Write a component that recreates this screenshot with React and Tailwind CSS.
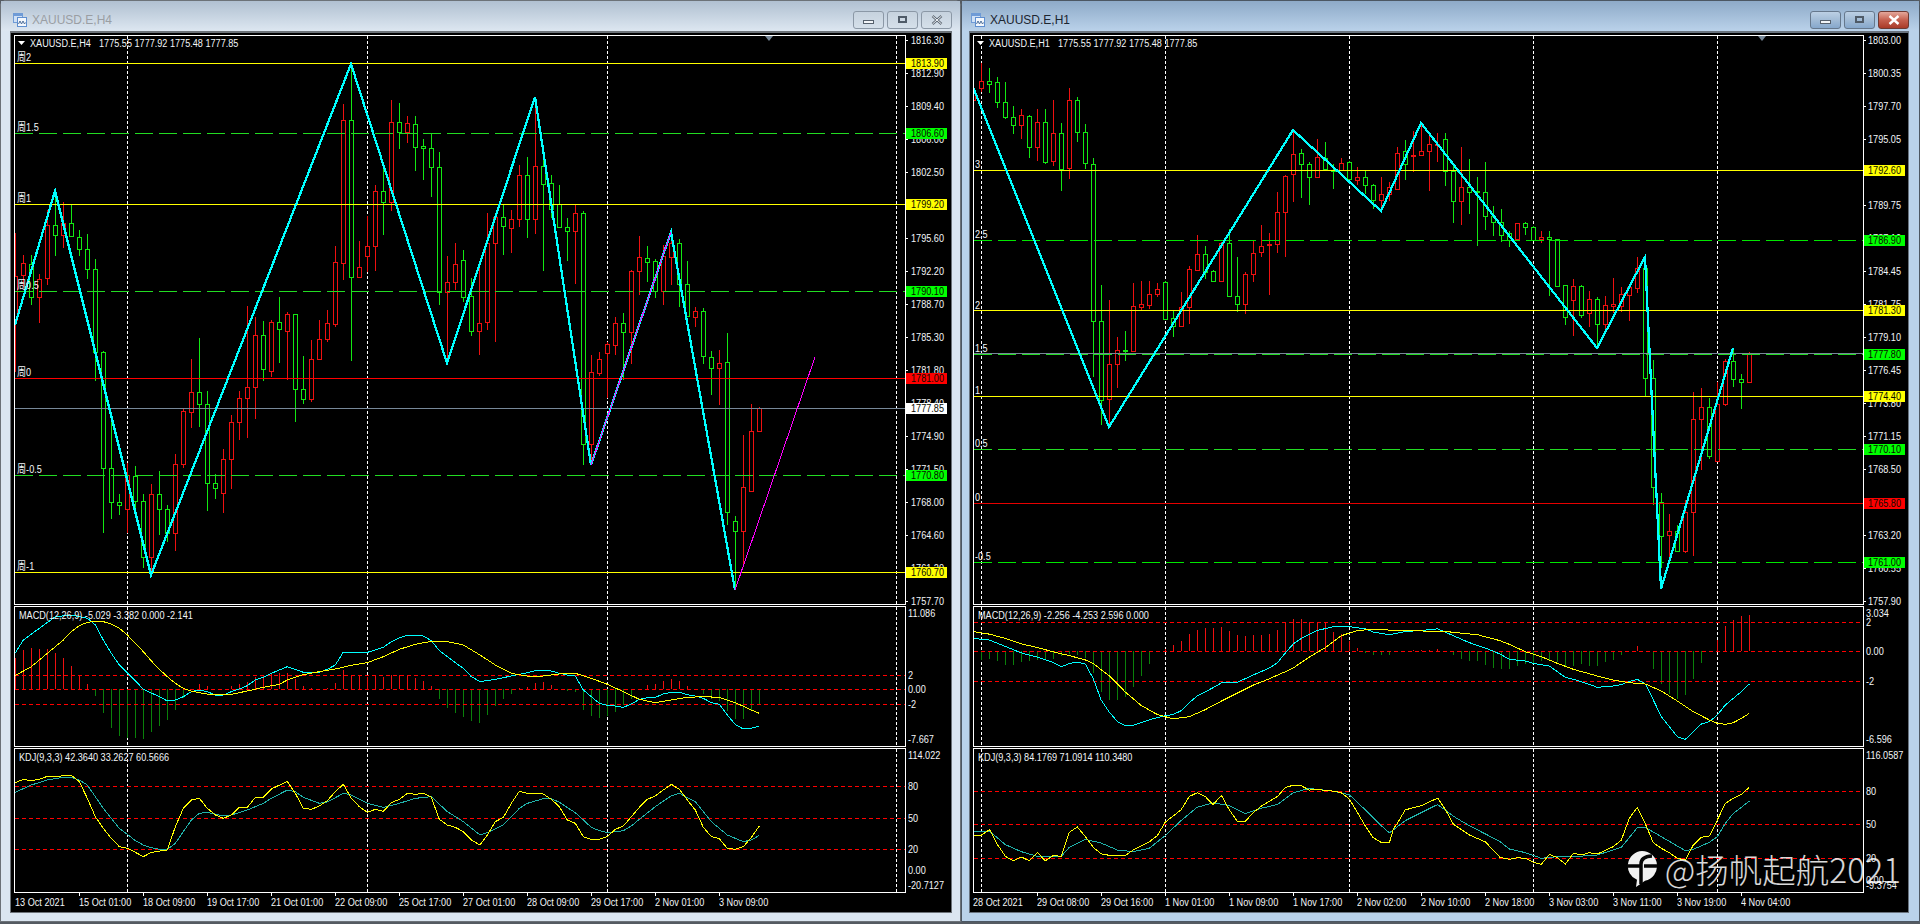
import React from "react";

const GREEN = "#12e812";
const RED = "#ee1010";
const YELLOW = "#ffff00";
const CYAN = "#00ffff";
const TEAL = "#20b2aa";

// [high, bodyTop, bodyBottom, low, isRed]
const leftCandles = [
  [233,276,320,372,1],[255,263,275,287,1],[255,264,297,305,0],[274,279,297,323,1],[210,225,278,285,1],
  [192,225,235,256,0],[202,223,235,248,1],[205,223,236,237,0],[230,237,249,256,0],[234,249,269,279,0],
  [259,269,352,381,0],[351,352,468,533,0],[422,468,502,519,0],[494,502,505,515,0],[463,475,509,533,1],
  [466,476,501,510,0],[494,501,557,568,0],[484,494,557,577,1],[471,494,509,535,0],[505,509,533,542,0],
  [454,464,533,551,1],[409,411,464,468,1],[359,392,412,428,1],[338,392,404,427,0],[391,404,483,511,0],
  [474,483,488,499,0],[449,459,493,513,1],[415,422,459,489,1],[391,398,422,440,1],[306,387,398,438,1],
  [317,335,387,419,1],[321,335,369,381,0],[320,322,371,377,1],[297,322,329,363,0],[312,314,331,380,1],
  [314,314,389,422,0],[356,389,399,404,0],[340,359,399,402,1],[320,339,359,360,1],[310,323,339,342,1],
  [246,262,324,327,1],[104,120,263,280,1],[64,120,277,361,0],[241,267,277,278,1],[216,246,256,272,1],
  [185,191,246,271,1],[167,191,202,235,0],[100,122,202,211,1],[103,122,132,149,0],[116,123,132,143,1],
  [116,124,147,171,0],[139,146,148,180,0],[133,148,167,197,0],[152,167,292,305,0],[256,282,292,362,1],
  [243,264,282,290,1],[250,260,297,302,0],[278,296,331,336,0],[263,323,331,355,1],[213,243,322,330,1],
  [217,217,243,342,1],[205,217,226,255,0],[210,219,228,253,1],[165,175,219,227,1],[157,175,219,238,0],
  [103,166,219,234,1],[157,166,184,271,0],[175,183,209,218,0],[185,204,227,228,0],[218,227,231,261,0],
  [205,213,231,284,1],[211,213,444,465,0],[355,372,444,463,1],[352,359,373,376,1],[342,344,353,398,1],
  [317,323,345,355,1],[313,323,332,380,0],[270,271,332,364,1],[236,257,271,295,1],[246,258,262,282,0],
  [259,261,291,298,0],[245,256,291,305,1],[232,243,257,285,1],[239,243,284,307,0],[261,284,316,317,0],
  [307,311,317,327,1],[308,311,356,364,0],[351,357,368,395,0],[350,363,368,405,1],[333,362,512,525,0],
  [516,521,531,590,0],[435,487,531,567,1],[404,431,491,492,1],[407,408,431,431,1],
];

const rightCandles = [
  [87,93,100,107,1],[63,81,88,92,1],[68,81,84,93,0],[77,82,102,108,0],[82,102,117,119,0],
  [106,117,125,134,0],[109,115,125,139,1],[115,116,147,158,0],[109,122,147,161,1],[109,122,162,164,0],
  [100,133,161,166,1],[123,133,169,191,0],[88,100,168,179,1],[97,100,132,142,0],[124,132,163,169,0],
  [158,164,321,377,0],[285,321,400,425,0],[300,364,399,427,1],[337,350,364,388,1],[331,350,351,361,0],
  [283,306,351,351,1],[281,304,307,310,1],[281,294,305,309,1],[283,289,294,297,1],[281,282,319,319,0],
  [311,318,326,337,0],[292,307,326,326,1],[266,269,307,324,1],[235,254,270,270,1],[246,254,272,279,0],
  [270,271,281,282,0],[242,243,281,282,1],[229,243,296,296,0],[257,296,304,312,0],[272,274,304,314,1],
  [241,253,274,282,1],[225,246,252,257,1],[233,244,245,295,1],[192,212,244,253,1],[175,176,212,257,1],
  [132,154,174,202,1],[149,153,164,198,0],[162,164,177,205,0],[139,157,177,177,1],[142,158,169,169,0],
  [164,170,171,189,0],[158,163,170,171,1],[161,162,179,179,0],[167,177,180,185,1],[170,177,185,194,0],
  [184,185,200,209,0],[177,194,200,207,1],[182,187,194,201,1],[147,153,189,189,1],[140,151,164,180,0],
  [131,155,156,172,1],[123,151,155,156,1],[135,144,151,191,1],[133,144,145,162,1],[133,139,171,186,0],
  [166,171,201,223,0],[147,187,201,225,1],[159,187,192,214,0],[177,191,192,246,0],[162,192,216,230,0],
  [206,216,222,236,0],[209,222,235,242,0],[231,233,240,247,0],[223,223,239,240,1],[222,223,227,235,0],
  [226,227,240,241,0],[231,237,239,243,1],[231,237,239,296,0],[239,239,286,287,0],[285,285,317,325,0],
  [279,286,300,336,1],[285,286,315,318,0],[291,299,313,327,1],[297,299,324,348,0],[296,305,324,330,1],
  [278,304,306,313,1],[287,294,306,312,1],[285,287,295,321,1],[257,268,288,293,1],[257,268,378,396,0],
  [360,378,487,505,0],[493,502,536,568,0],[514,531,535,563,1],[525,531,551,552,0],[500,512,551,553,1],
  [392,419,512,556,1],[388,407,419,470,1],[398,407,456,459,0],[382,404,461,461,1],[359,361,404,406,1],
  [348,361,379,387,0],[374,379,382,409,0],[352,353,382,383,1],
];

// indicator lines read off the chart, in crop coordinates
const crop = (pts, ox, oy, sx = 3, sy = 3) => pts.map(([x, y]) => `${ox + x / sx},${oy + y / sy}`).join(" ");
const crop2 = (pts) => crop(pts, 970, 60, 2.904, 1.867);

const leftMacdHist = [
  205,180,175,178,178,190,205,228,254,282,318,368,413,437,445,443,447,425,408,390,360,325,298,282,288,298,298,288,282,275,
  262,258,250,248,248,268,288,295,297,295,278,240,255,258,260,258,262,255,255,255,263,272,288,327,353,368,380,392,400,375,
  348,327,312,294,292,278,276,285,298,302,306,360,378,385,378,366,345,326,300,285,283,273,267,273,288,298,312,326,332,362,
  387,387,362,343,
];

const rightMacdHist = [
  -9,-9,-8,-10,-14,-14,-11,-10,-9,-9,-8,-5,-3,-4,-7,-22,-41,-49,-49,-46,-36,-25,-13,0,2,6,10,17,21,23,
  23,24,20,16,15,16,16,17,21,28,32,32,29,29,28,19,17,10,3,-2,-4,-4,-4,-1,0,1,1,1,2,0,
  -4,-8,-10,-10,-14,-17,-18,-18,-15,-13,-12,-10,-9,-11,-15,-15,-13,-15,-15,-11,-9,-4,0,5,0,-18,-33,-43,-48,-44,
  -28,-12,-1,11,25,31,35,36,
];

const leftLines = {
  macdCyan: crop([[45,190],[70,150],[118,115],[166,80],[214,75],[262,85],[286,105],[310,150],[334,190],[358,225],[382,248],[406,272],[430,298],[478,320],[502,333],[526,330],[550,320],[574,305],[598,300],[622,305],[646,315],[670,315],[694,305],[718,297],[742,287],[766,270],[790,262],[814,250],[862,230],[886,238],[910,247],[958,247],[982,238],[1006,225],[1030,186],[1054,189],[1102,187],[1126,180],[1150,172],[1174,155],[1198,143],[1222,136],[1246,135],[1270,138],[1294,152],[1318,182],[1342,200],[1366,218],[1390,235],[1414,260],[1440,275]], 0, 590)
    + " " + crop([[46,268],[94,258],[142,248],[166,242],[190,240],[214,243],[238,250],[262,255],[286,258],[310,300],[334,320],[358,340],[382,346],[406,348],[430,352],[454,342],[478,328],[502,323],[526,322],[550,312],[574,307],[598,307],[622,314],[646,318],[670,325],[694,338],[718,343],[742,375],[766,404],[790,417],[814,415],[838,408]], 480, 590),
  macdYellow: crop([[45,257],[94,230],[142,190],[190,150],[214,125],[238,107],[262,97],[286,94],[310,95],[334,102],[358,115],[382,135],[406,160],[430,185],[454,213],[478,238],[502,260],[526,280],[550,295],[574,303],[598,308],[622,312],[646,315],[694,313],[742,303],[790,292],[838,283],[862,270],[910,254],[958,245],[1006,237],[1054,226],[1102,218],[1150,200],[1198,178],[1246,163],[1294,154],[1342,155],[1390,165],[1440,195]], 0, 590)
    + " " + crop([[46,225],[94,250],[142,258],[190,258],[238,252],[286,250],[334,265],[382,283],[430,305],[478,328],[526,338],[574,330],[622,322],[670,320],[718,322],[766,338],[814,360],[838,370]], 480, 590),
  kdjYellow: crop([[45,578],[70,568],[94,572],[118,568],[142,559],[166,559],[214,556],[238,575],[262,625],[286,680],[310,715],[334,745],[358,770],[382,775],[406,787],[430,800],[454,787],[502,780],[526,710],[550,655],[574,630],[598,625],[622,655],[646,675],[670,685],[694,675],[718,652],[742,652],[766,622],[790,622],[814,597],[862,574],[886,610],[910,655],[934,658],[958,648],[982,632],[1006,605],[1030,583],[1054,625],[1078,650],[1102,667],[1126,658],[1150,664],[1174,638],[1198,628],[1222,610],[1246,613],[1270,610],[1294,622],[1318,688],[1342,705],[1366,712],[1390,725],[1414,750],[1440,765]], 0, 590)
    + " " + crop([[22,735],[46,695],[70,682],[94,640],[118,604],[142,610],[190,612],[214,628],[238,650],[262,690],[286,700],[310,740],[334,748],[358,748],[382,740],[406,718],[430,708],[454,680],[478,652],[502,628],[526,618],[550,600],[574,583],[598,598],[622,630],[646,660],[670,712],[694,740],[718,746],[742,775],[766,778],[790,770],[814,742],[838,708]], 480, 590),
  kdjTeal: crop([[45,607],[94,585],[142,570],[190,562],[214,562],[238,570],[262,585],[286,620],[310,655],[334,685],[358,715],[382,733],[406,752],[430,765],[454,773],[478,778],[502,778],[526,760],[550,725],[574,690],[598,670],[622,667],[670,678],[694,675],[742,660],[790,640],[814,625],[862,600],[886,605],[910,622],[958,640],[982,636],[1030,610],[1054,615],[1102,640],[1150,652],[1198,640],[1246,625],[1294,620],[1342,665],[1390,695],[1440,735]], 0, 590)
    + " " + crop([[22,728],[70,705],[118,655],[142,640],[190,626],[214,626],[238,637],[286,668],[334,712],[358,722],[382,728],[430,722],[454,708],[478,688],[526,650],[574,617],[598,610],[646,635],[694,695],[742,735],[790,755],[814,750],[838,736]], 480, 590),
};

const rightLines = {
  macdCyan: crop2([[9,1080],[57,1083],[103,1095],[149,1107],[196,1115],[242,1125],[265,1133],[288,1127],[312,1124],[335,1128],[358,1155],[381,1195],[405,1218],[428,1235],[451,1243],[474,1242],[520,1232],[567,1224],[590,1222],[613,1215],[637,1200],[660,1187],[706,1172],[730,1163],[776,1162],[823,1148],[870,1135],[893,1125],[916,1107],[939,1090],[962,1080],[1009,1065],[1055,1058],[1102,1058],[1148,1062],[1171,1068],[1218,1073],[1264,1067],[1311,1065],[1358,1062],[1404,1075],[1451,1088],[1497,1098]])
    + " " + crop([[0,162],[28,178],[76,183],[100,190],[148,198],[172,215],[196,232],[220,238],[244,245],[292,262],[340,258],[364,254],[388,244],[412,238],[436,252],[460,300],[484,350],[508,380],[532,410],[556,418],[580,395],[604,372],[628,365],[652,345],[676,315],[700,295],[724,275],[748,252]], 1500, 600),
  macdYellow: crop2([[9,1067],[57,1072],[103,1080],[149,1090],[196,1097],[242,1105],[288,1112],[335,1120],[358,1127],[405,1150],[451,1180],[497,1205],[544,1222],[590,1230],[637,1226],[683,1213],[730,1197],[776,1182],[823,1167],[870,1155],[916,1142],[939,1135],[985,1115],[1032,1097],[1078,1075],[1125,1065],[1171,1063],[1241,1065],[1311,1066],[1381,1067],[1427,1070],[1474,1073]])
    + " " + crop([[0,122],[28,133],[76,155],[124,170],[172,190],[220,208],[292,228],[340,240],[388,248],[436,252],[484,273],[532,303],[580,335],[628,360],[652,370],[676,373],[700,368],[724,355],[748,340]], 1500, 600),
  kdjYellow: crop2([[9,1447],[33,1447],[57,1437],[80,1465],[103,1487],[126,1495],[149,1488],[172,1495],[196,1480],[219,1495],[242,1485],[265,1487],[288,1442],[312,1432],[335,1450],[358,1470],[381,1482],[405,1485],[451,1485],[474,1475],[520,1460],[544,1448],[567,1423],[613,1400],[637,1375],[660,1368],[683,1375],[706,1390],[730,1373],[753,1400],[776,1421],[800,1421],[823,1405],[846,1393],[893,1375],[916,1358],[939,1354],[962,1355],[985,1363],[1009,1362],[1055,1365],[1078,1368],[1102,1380],[1125,1405],[1148,1430],[1171,1452],[1195,1461],[1218,1461],[1230,1435],[1241,1425],[1264,1400],[1311,1392],[1358,1378],[1381,1400],[1404,1427],[1451,1447],[1497,1460]])
    + " " + crop([[0,772],[28,778],[52,773],[76,775],[100,787],[124,793],[148,763],[172,773],[196,792],[220,760],[244,765],[268,758],[292,762],[340,740],[364,720],[388,655],[412,622],[436,672],[460,728],[484,745],[508,758],[532,775],[556,780],[580,735],[604,712],[628,708],[652,660],[676,610],[700,595],[724,583],[748,562]], 1500, 600),
  kdjTeal: crop2([[9,1440],[57,1440],[103,1465],[149,1478],[196,1487],[265,1487],[288,1470],[335,1455],[381,1462],[428,1475],[474,1478],[520,1472],[567,1448],[613,1420],[660,1395],[706,1387],[753,1392],[800,1407],[846,1397],[893,1390],[939,1368],[985,1360],[1055,1365],[1102,1372],[1148,1400],[1195,1430],[1218,1443],[1264,1420],[1311,1405],[1358,1390],[1404,1412],[1451,1430],[1497,1445]])
    + " " + crop([[0,725],[28,747],[76,758],[124,775],[172,770],[220,770],[292,765],[364,742],[412,683],[436,682],[484,710],[532,738],[556,752],[580,748],[628,727],[652,710],[676,670],[700,640],[724,622],[748,603]], 1500, 600),
};

const charts = {
  left: {
    title: "XAUUSD.E,H4",
    ohlc: "1775.55 1777.92 1775.48 1777.85",
    ohlcX: 99,
    frameX: 14,
    frameW: 892,
    clientW: 940,
    firstBar: 15,
    axisX: 911,
    indAxisX: 908,
    tagX: 906,
    marker: 769,
    verticals: [127, 367, 607, 896],
    candles: leftCandles,
    zigzag: "15,325 55,191 151,575 351,64 447,363 535,97 591,465 671,232 735,590",
    magenta: ["591,465 671,232", "735,590 815,357"],
    hlines: [
      { y: 63, color: YELLOW, tag: "1813.90", bg: "#ffff00" },
      { y: 133, color: "#22dc22", dash: true, tag: "1806.60", bg: "#00ff00" },
      { y: 204, color: YELLOW, tag: "1799.20", bg: "#ffff00" },
      { y: 291, color: "#22dc22", dash: true, tag: "1790.10", bg: "#00ff00" },
      { y: 378, color: "#ff0000", tag: "1781.00", bg: "#ff0000" },
      { y: 408, color: "#778899", tag: "1777.85", bg: "#ffffff" },
      { y: 475, color: "#22dc22", dash: true, tag: "1770.80", bg: "#00ff00" },
      { y: 572, color: YELLOW, tag: "1760.70", bg: "#ffff00" },
    ],
    fibs: [["周2", 61], ["周1.5", 131], ["周1", 202], ["周0.5", 289], ["周0", 376], ["周-0.5", 473], ["周-1", 570]],
    fibX: 17,
    prices: ["1816.30","1812.90","1809.40","1806.00","1802.50","1799.10","1795.60","1792.20","1788.70","1785.30","1781.80","1778.40","1774.90","1771.50","1768.00","1764.60","1761.20","1757.70"],
    macd: {
      head: "MACD(12,26,9) -5.029 -3.382 0.000 -2.141",
      levels: [[675, "2"], [689, "0.00"], [704, "-2"]],
      top: "11.086",
      bottom: "-7.667",
      zero: 689.3,
      bars: leftMacdHist.map((y) => (298 - y) / 3),
    },
    kdj: {
      head: "KDJ(9,3,3) 42.3640 33.2627 60.5666",
      levels: [[786, "80"], [818, "50"], [849, "20"]],
      top: "114.022",
      extra: [[870, "0.00"], [885, "-20.7127"]],
    },
    lines: leftLines,
    timeStart: 1,
    times: ["13 Oct 2021","15 Oct 01:00","18 Oct 09:00","19 Oct 17:00","21 Oct 01:00","22 Oct 09:00","25 Oct 17:00","27 Oct 01:00","28 Oct 09:00","29 Oct 17:00","2 Nov 01:00","3 Nov 09:00"],
  },
  right: {
    title: "XAUUSD.E,H1",
    ohlc: "1775.55 1777.92 1775.48 1777.85",
    ohlcX: 1058,
    frameX: 973,
    frameW: 891,
    clientW: 938,
    firstBar: 973,
    axisX: 1868,
    indAxisX: 1866,
    tagX: 1864,
    marker: 1762,
    verticals: [981, 1165, 1349, 1533, 1717],
    candles: rightCandles,
    zigzag: "973,87 1109,427 1293,130 1381,211 1421,123 1597,348 1645,257 1661,589 1733,348",
    magenta: [],
    hlines: [
      { y: 170, color: YELLOW, tag: "1792.60", bg: "#ffff00" },
      { y: 240, color: "#00e600", dash: true, tag: "1786.90", bg: "#00ff00" },
      { y: 310, color: YELLOW, tag: "1781.30", bg: "#ffff00" },
      { y: 353, color: "#778899" },
      { y: 354, color: "#22dc22", dash: true, tag: "1777.80", bg: "#00ff00" },
      { y: 396, color: YELLOW, tag: "1774.40", bg: "#ffff00" },
      { y: 449, color: "#22dc22", dash: true, tag: "1770.10", bg: "#00ff00" },
      { y: 503, color: "#e60000", tag: "1765.80", bg: "#ff0000" },
      { y: 562, color: "#00e600", dash: true, tag: "1761.00", bg: "#00ff00" },
    ],
    fibs: [["3", 168], ["2.5", 238], ["2", 309], ["1.5", 352], ["1", 394], ["0.5", 447], ["0", 501], ["-0.5", 560]],
    fibX: 975,
    prices: ["1803.00","1800.35","1797.70","1795.05","1792.40","1789.75","1787.10","1784.45","1781.75","1779.10","1776.45","1773.80","1771.15","1768.50","1765.85","1763.20","1760.55","1757.90"],
    macd: {
      head: "MACD(12,26,9) -2.256 -4.253 2.596 0.000",
      levels: [[622, "2"], [651, "0.00"], [681, "-2"]],
      top: "3.034",
      bottom: "-6.596",
      zero: 651.3,
      bars: rightMacdHist,
    },
    kdj: {
      head: "KDJ(9,3,3) 84.1769 71.0914 110.3480",
      levels: [[791, "80"], [824, "50"], [858, "20"]],
      top: "116.0587",
      extra: [[880, "0.00"], [885, "-9.3754"]],
    },
    lines: rightLines,
    timeStart: 0,
    times: ["28 Oct 2021","29 Oct 08:00","29 Oct 16:00","1 Nov 01:00","1 Nov 09:00","1 Nov 17:00","2 Nov 02:00","2 Nov 10:00","2 Nov 18:00","3 Nov 03:00","3 Nov 11:00","3 Nov 19:00","4 Nov 04:00"],
  },
};

const Label = ({ x, y, fill = "#f2f5f8", children }) => (
  <text transform={`translate(${x} ${y}) scale(.83 1)`} fill={fill} className="text-[11px]">
    {children}
  </text>
);

const Frame = ({ c, y, h }) => (
  <rect x={c.frameX + 0.5} y={y + 0.5} width={c.frameW - 1} height={h - 1} fill="none" stroke="#fff" />
);

const Verticals = ({ c, y1, y2 }) =>
  c.verticals.map((x) => (
    <line key={x} x1={x + 0.5} x2={x + 0.5} y1={y1} y2={y2} stroke="#fff" strokeDasharray="3 2" shapeRendering="crispEdges" />
  ));

const MainPane = ({ c }) => {
  const right = c.frameX + c.frameW - 1;
  return (
    <svg className="block h-[570px] w-full" viewBox={`${c.frameX} 35 ${c.clientW - 3} 570`}>
      <Verticals c={c} y1={36} y2={604} />
      <g shapeRendering="crispEdges">
        {c.candles.map(([h, t, b, l, isRed], k) => {
          const x = c.firstBar + k * 8 + 0.5;
          const color = isRed ? RED : GREEN;
          return (
            <g key={k} stroke={color}>
              <line x1={x} x2={x} y1={h} y2={l} />
              <rect x={x - 2} y={t + 0.5} width={4} height={Math.max(b - t, 1)} fill="#000" />
            </g>
          );
        })}
        {c.hlines.map((l) => (
          <line
            key={l.color + l.y}
            x1={c.frameX + 1}
            x2={right}
            y1={l.y + 0.5}
            y2={l.y + 0.5}
            stroke={l.color}
            strokeDasharray={l.dash ? "18 6" : undefined}
          />
        ))}
        <polyline points={c.zigzag} fill="none" stroke={CYAN} strokeWidth={2.25} />
      </g>
      {c.magenta.map((pts) => (
        <polyline key={pts} points={pts} fill="none" stroke="#ff00ff" strokeWidth={1} shapeRendering="crispEdges" />
      ))}
      {c.fibs.map(([text, y]) => (
        <Label key={text} x={c.fibX} y={y}>{text}</Label>
      ))}
      <path d={`M${c.frameX + 4} 41h7l-3.5 4z`} fill="#fff" />
      <Label x={c.frameX + 16} y={47}>{c.title}</Label>
      <Label x={c.ohlcX} y={47}>{c.ohlc}</Label>
      <path d={`M${c.marker - 4} 36h8l-4 5z`} fill="#778899" />
      {c.prices.map((p, i) => (
        <g key={p}>
          <line x1={right} x2={right + 3} y1={40.5 + i * 33} y2={40.5 + i * 33} stroke="#fff" />
          <Label x={c.axisX} y={44 + i * 33}>{p}</Label>
        </g>
      ))}
      {c.hlines.filter((l) => l.tag).map((l) => (
        <g key={l.tag}>
          <rect x={c.tagX} y={l.y - 5} width={41} height={11} fill={l.bg} />
          <Label x={c.axisX} y={l.y + 4} fill="#0b0b00">{l.tag}</Label>
        </g>
      ))}
      <Frame c={c} y={35} h={570} />
    </svg>
  );
};

const MacdPane = ({ c }) => {
  const right = c.frameX + c.frameW - 1;
  const m = c.macd;
  return (
    <svg className="block h-[141px] w-full" viewBox={`${c.frameX} 606 ${c.clientW - 3} 141`}>
      <Verticals c={c} y1={607} y2={746} />
      <g shapeRendering="crispEdges">
        {m.bars.map((d, k) => {
          const x = c.firstBar + k * 8 + 0.5;
          return <line key={k} x1={x} x2={x} y1={m.zero} y2={m.zero - d} stroke={d >= 0 ? RED : "#0a800a"} />;
        })}
        {m.levels.map(([y]) => (
          <line key={y} x1={c.frameX + 1} x2={right} y1={y + 0.5} y2={y + 0.5} stroke="#ff0000" strokeDasharray="4 3" />
        ))}
        <polyline points={c.lines.macdCyan} fill="none" stroke={CYAN} strokeWidth={1} />
        <polyline points={c.lines.macdYellow} fill="none" stroke={YELLOW} strokeWidth={1} />
      </g>
      <Label x={c.frameX + 5} y={619}>{m.head}</Label>
      <Label x={c.indAxisX} y={617}>{m.top}</Label>
      {m.levels.map(([y, t]) => (
        <Label key={y} x={c.indAxisX} y={y + 4}>{t}</Label>
      ))}
      <Label x={c.indAxisX} y={743}>{m.bottom}</Label>
      <Frame c={c} y={606} h={141} />
    </svg>
  );
};

const KdjPane = ({ c }) => {
  const right = c.frameX + c.frameW - 1;
  const m = c.kdj;
  return (
    <svg className="block h-[145px] w-full" viewBox={`${c.frameX} 748 ${c.clientW - 3} 145`}>
      <Verticals c={c} y1={749} y2={892} />
      <g shapeRendering="crispEdges">
        {m.levels.map(([y]) => (
          <line key={y} x1={c.frameX + 1} x2={right} y1={y + 0.5} y2={y + 0.5} stroke="#ff0000" strokeDasharray="4 3" />
        ))}
        <polyline points={c.lines.kdjTeal} fill="none" stroke={TEAL} strokeWidth={1} />
        <polyline points={c.lines.kdjYellow} fill="none" stroke={YELLOW} strokeWidth={1} />
      </g>
      <Label x={c.frameX + 5} y={761}>{m.head}</Label>
      <Label x={c.indAxisX} y={759}>{m.top}</Label>
      {m.levels.map(([y, t]) => (
        <Label key={y} x={c.indAxisX} y={y + 4}>{t}</Label>
      ))}
      {m.extra.map(([y, t]) => (
        <Label key={t} x={c.indAxisX} y={y + 4}>{t}</Label>
      ))}
      <Frame c={c} y={748} h={145} />
    </svg>
  );
};

const TimeAxis = ({ c }) => (
  <div className={`flex h-[20px] text-[11px] leading-none text-[#f2f5f8] ${c.timeStart ? "pl-[1px]" : ""}`}>
    {c.times.map((t, i) => (
      <div key={t} className="relative w-[64px] shrink-0">
        {i > 0 && <span className="absolute left-0 top-0 h-[3px] w-px bg-white" />}
        <span className="absolute left-0 top-[4px] origin-left scale-x-[.83] whitespace-nowrap">{t}</span>
      </div>
    ))}
  </div>
);

const WindowIcon = () => (
  <svg width="14" height="14" viewBox="0 0 14 14" className="shrink-0">
    <rect x="0.5" y="0.5" width="9" height="9" fill="#cfe0f5" stroke="#6f9bd6" />
    <rect x="0.5" y="0.5" width="9" height="2.5" fill="#6f9bd6" />
    <rect x="4.5" y="4.5" width="9" height="9" fill="#f4f8fd" stroke="#5f8fd0" />
    <path d="M5.5 11l1.5-3 1.5 3 1.5-3 1.5 3 1-1.5" fill="none" stroke="#4e6f9a" strokeWidth="1" />
  </svg>
);

const CaptionButton = ({ kind, active }) => {
  const bg =
    kind === "close" && active
      ? "border-[#6e3a33] bg-linear-to-b from-[#e3a79b] via-[#c5604f] to-[#a93a28]"
      : active
        ? "border-[#66788c] bg-linear-to-b from-[#bcd0e4] via-[#a2bcd6] to-[#86a8cc]"
        : "border-[#8b98a6] bg-linear-to-b from-[#c6d2de] to-[#d5e0ea]";
  return (
    <div className={`flex h-[18px] w-[31px] items-center justify-center rounded-[3px] border ${bg}`}>
      {kind === "min" && <span className="mt-[4px] h-[4px] w-[11px] border border-[#56616d] bg-[#f2f5f8]" />}
      {kind === "max" && <span className="h-[7px] w-[9px] border-2 border-[#4f5b68] bg-transparent" />}
      {kind === "close" && (
        <svg width="12" height="10" viewBox="0 0 12 10">
          <path d="M1.5 1l9 8M10.5 1l-9 8" stroke={active ? "#fff" : "#5d6874"} strokeWidth="2.4" />
          {!active && <path d="M1.5 1l9 8M10.5 1l-9 8" stroke="#eef2f5" strokeWidth="1" />}
        </svg>
      )}
    </div>
  );
};

const ChartWindow = ({ c, active }) => (
  <div
    className={
      active
        ? "flex h-[922px] w-[959px] flex-col rounded-t-[6px] border border-[#4c5763] bg-[#b9d2ea] pl-[7px] pr-[10px]"
        : "flex h-[922px] w-[961px] flex-col rounded-t-[6px] border border-[#6c7278] bg-[#dbe6f1] pl-[9px] pr-[8px]"
    }
  >
    <div
      className={
        active
          ? "-mx-[7px] -mr-[10px] flex h-[30px] items-center bg-linear-to-b from-[#8eaac8] to-[#bad2ea] pl-[9px] pr-[10px] pt-[7px]"
          : "-mx-[9px] -mr-[8px] flex h-[30px] items-center bg-linear-to-b from-[#b0c0d1] to-[#dde7f1] pl-[12px] pr-[8px] pt-[7px]"
      }
    >
      <WindowIcon />
      <span className={active ? "ml-[5px] text-[12px] text-[#1c2530]" : "ml-[5px] text-[12px] text-[#9a9ea3]"}>{c.title}</span>
      <div className="ml-auto flex gap-[3px]">
        <CaptionButton kind="min" active={active} />
        <CaptionButton kind="max" active={active} />
        <CaptionButton kind="close" active={active} />
      </div>
    </div>
    <div
      className={
        active
          ? "h-[882px] w-[940px] border-x border-t-2 border-b border-[#69737e] bg-black pl-[3px] pt-[2px]"
          : "h-[882px] w-[942px] border-x border-t-2 border-b border-[#6c7278] bg-black pl-[3px] pt-[2px]"
      }
    >
      <div className="flex flex-col gap-px">
        <MainPane c={c} />
        <MacdPane c={c} />
        <KdjPane c={c} />
      </div>
      <TimeAxis c={c} />
    </div>
  </div>
);

const WatermarkLogo = () => (
  <svg width="30" height="36" viewBox="0 0 30 36" className="shrink-0">
    <path d="M15 0a15 15 0 0 1 3 29.7L9 36l1-7.2A15 15 0 0 1 15 0z" fill="#f2f2f2" />
    <path d="M0 15h13M17 15h13M14 33V13Q14 5.500 25 5" fill="none" stroke="#050505" strokeWidth="3.500" />
  </svg>
);

export default function App() {
  return (
    <div className="relative flex h-[924px] w-[1920px] overflow-hidden bg-[#555b62] font-['Liberation_Sans','Noto_Sans_CJK_SC',sans-serif]">
      <ChartWindow c={charts.left} />
      <ChartWindow c={charts.right} active />
      <div className="absolute bottom-[37px] right-[19px] flex items-center gap-[8px] text-white/85">
        <WatermarkLogo />
        <span className="font-['Noto_Sans_CJK_SC','Noto_Sans',sans-serif] text-[33.5px] font-light leading-none">@扬帆起航2021</span>
      </div>
    </div>
  );
}
